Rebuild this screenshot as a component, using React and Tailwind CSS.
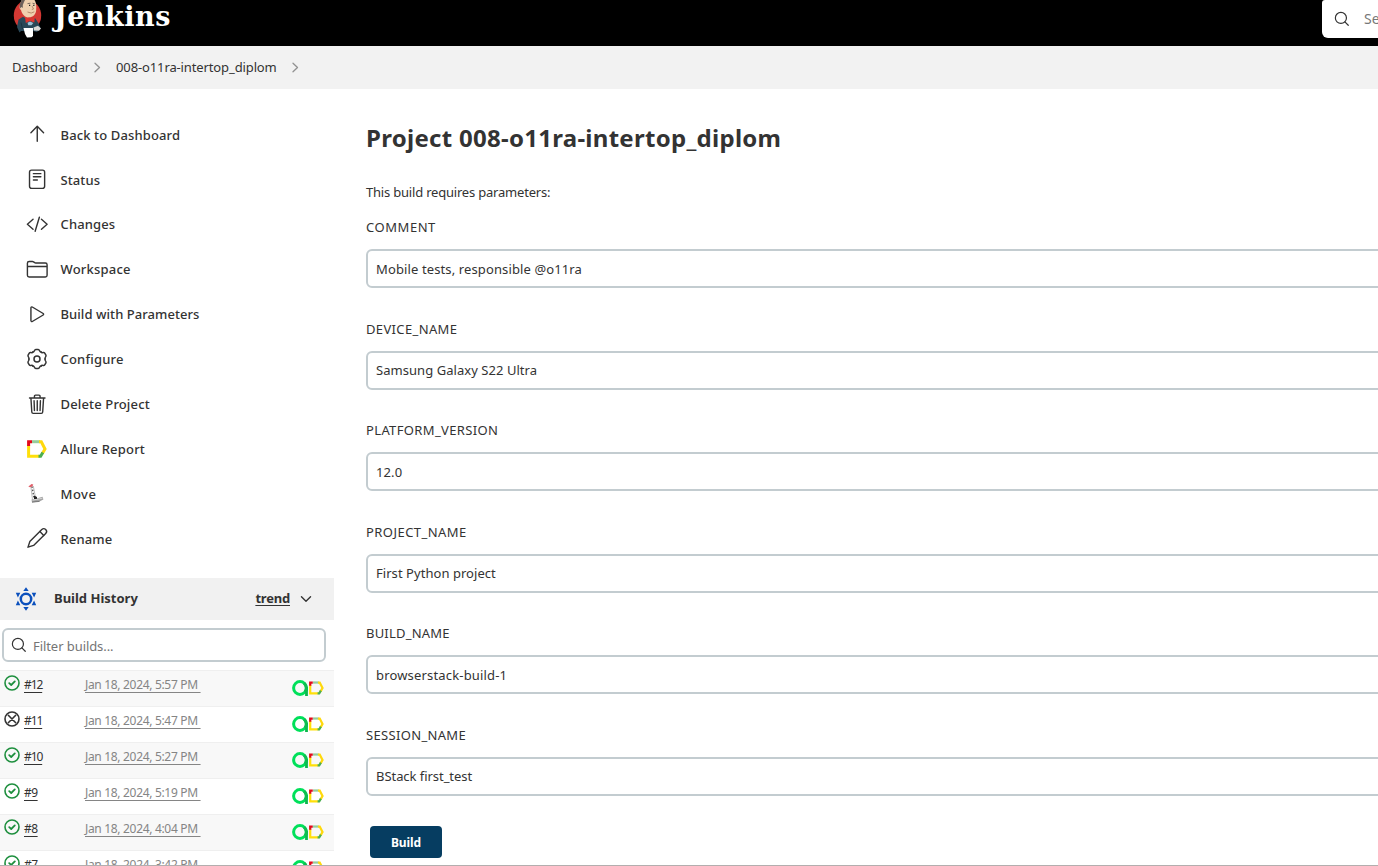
import React from "react";

const line = {
  fill: "none",
  stroke: "currentColor",
  strokeLinecap: "round",
  strokeLinejoin: "round",
  strokeWidth: 32,
};

function Icon({ children, className = "size-[22.5px]" }) {
  return (
    <svg viewBox="0 0 512 512" className={className + " shrink-0"} {...line}>
      {children}
    </svg>
  );
}

function Search({ className }) {
  return (
    <Icon className={className}>
      <g strokeWidth="38">
        <path d="M221 44a177 177 0 10177 177A177 177 0 00221 44z" />
        <path d="M348 348L456 456" />
      </g>
    </Icon>
  );
}

function Chevron({ className }) {
  return (
    <svg viewBox="0 0 12 12" className={className} fill="none" stroke="#929292" strokeWidth="1.3" strokeLinecap="round" strokeLinejoin="round">
      <path d="M4 1.2L8.5 5.5L4 9.8" />
    </svg>
  );
}

function Gear() {
  return (
    <svg viewBox="0 0 24 24" className="size-6 shrink-0" fill="none" stroke="currentColor" strokeWidth="1.5" strokeLinecap="round" strokeLinejoin="round">
      <circle cx="12" cy="12" r="3" />
      {[0, 60, 120, 180, 240, 300].map((a) => (
        <path key={a} transform={`rotate(${a} 12 12)`} d="M7.9 4.9C9.8 5.2 9 2.4 10.8 2.4H13.2C15 2.4 14.2 5.2 16.1 4.9" />
      ))}
    </svg>
  );
}

function Pencil() {
  return (
    <svg viewBox="0 0 24 24" className="size-6 shrink-0" fill="none" stroke="currentColor" strokeWidth="1.4" strokeLinecap="round" strokeLinejoin="round">
      <path d="M3 21.2L4.8 15.6L16.8 3.6A2.7 2.7 0 0120.7 7.5L8.6 19.4L3 21.2Z" />
      <path d="M14.9 5.6L18.7 9.4" />
    </svg>
  );
}

function AllureMark({ className }) {
  return (
    <svg viewBox="0 0 20 18" className={className} fill="none" strokeWidth="3">
      <path d="M5 1.7H13" stroke="#97cc9b" />
      <path d="M12 1.7H14.3L18 9L15.4 13.5" stroke="#ffd90c" />
      <path d="M1.6 5V16.3H12.5" stroke="#ffdf0a" />
      <path d="M15.8 12.5L13.6 16.3H11.5" stroke="#4caf50" />
      <path d="M1.6 6V1.7H5" stroke="#e3091b" />
    </svg>
  );
}

function Crane() {
  return (
    <svg viewBox="0 0 24 24" className="size-6" fill="none">
      <path d="M5.8 4L7.6 18.5M8.3 4L10.8 17" stroke="#b5b5b5" strokeWidth="0.9" />
      <path d="M7 4.5L9.2 17" stroke="#555" strokeWidth="1.4" strokeDasharray="1.5 1.7" />
      <path d="M3.3 4.6L5 3.3L6.5 2L8.3 2.4L7.4 4.6L5 5.2Z" fill="#e0606a" />
      <path d="M6.5 17.5L11.5 16.5L17.6 14.8L18.4 17.5L14.5 19.4L7 20.4Z" fill="#a3a3a3" />
      <path d="M9 13.6L12 15V17H9Z" fill="#222" />
      <path d="M7.5 18.2L17.5 16.2" stroke="#dadada" strokeWidth="0.9" />
      <path d="M7 20.1L14.5 19.4" stroke="#666" strokeWidth="0.8" />
    </svg>
  );
}

function Butler() {
  return (
    <svg viewBox="0 0 30 38" className="h-[38px] w-[30px]">
      <ellipse cx="14.5" cy="15.5" rx="13.7" ry="15.3" fill="#d33833" />
      <path d="M7.5 4C8 -2 13 -4 17 -3C22 -2 23.7 3 23.2 9C23.4 14 20 17.3 16 17.3C12 18 9 14 8 10C6.3 9 6 6 7.5 4Z" fill="#efd0ae" />
      <path d="M7 8.5C6 4 8 -1 13 -2L11 2L9.8 5L9.8 8L8.4 7Z" fill="#6b5f59" />
      <path d="M14.5 3.6L17.4 3.2M19.5 3.2L21.8 3.8" stroke="#5d504a" strokeWidth="0.8" />
      <path d="M16 5.4H17.2M20.2 5.4H21.4" stroke="#222" strokeWidth="1.1" />
      <path d="M19 6L20.5 9L18.8 9.6M14.5 12Q18.5 14.2 21.3 11.8" stroke="#a87a5c" strokeWidth="0.8" fill="none" />
      <path d="M5.5 19.5L10 16.8L16 20L22 18L26 24L27.5 28L24 32L20 31H8L6.5 32.5L4 27Z" fill="#294757" />
      <path d="M12 17L16.7 19.4L21.8 17.2L21.3 22.6L17 21L12.8 23Z" fill="#e0352f" />
      <path d="M14.5 22.8L17 21.6L20.3 23L18.5 25.2H15.3Z" fill="#9dc0d6" />
      <path d="M10.5 28H20V36L18.5 37.3L14 37.5L12 34Z" fill="#fff" />
      <path d="M20.5 27.5L25 25.8L28 28.5L26 30.8L21 30.5Z" fill="#d9d8d6" />
      <path d="M8 22.5L9.5 29" stroke="#1d3442" strokeWidth="1" />
    </svg>
  );
}

const nav = [
  { label: "Back to Dashboard", track: "tracking-[0.13px]", icon: <Icon><path d="M112 220l144-144 144 144M256 84v330" /></Icon> },
  {
    label: "Status",
    track: "tracking-[0.1px]",
    icon: <Icon><rect x="80" y="48" width="344" height="416" rx="48" /><path d="M168 128h170M168 200h170M168 272h90" /></Icon>,
  },
  { label: "Changes", track: "tracking-[0.13px]", icon: <Icon><path d="M160 368L32 256l128-112M352 368l128-112-128-112M304 96l-96 320" /></Icon> },
  {
    label: "Workspace",
    track: "tracking-[0.2px]",
    icon: (
      <Icon>
        <path d="M440 432H72a40 40 0 01-40-40V120a40 40 0 0140-40h75.89a40 40 0 0122.19 6.72l27.84 18.56a40 40 0 0022.19 6.72H440a40 40 0 0140 40v240a40 40 0 01-40 40zM32 192h448" />
      </Icon>
    ),
  },
  {
    label: "Build with Parameters",
    track: "tracking-[0.06px]",
    icon: <Icon><path d="M112 111v290c0 17.44 17 28.52 31 20.16l247.9-148.37c12.12-7.25 12.12-26.33 0-33.58L143 90.84c-14-8.36-31 2.72-31 20.16z" /></Icon>,
  },
  { label: "Configure", track: "tracking-[0.2px]", icon: <Gear /> },
  {
    label: "Delete Project",
    track: "tracking-[0.15px]",
    icon: (
      <Icon>
        <path d="M112 112l20 320c.95 18.49 14.4 32 32 32h184c17.67 0 30.87-13.51 32-32l20-320M80 112h352M192 112V72a23.93 23.93 0 0124-24h80a23.93 23.93 0 0124 24v40M256 176v224M184 176l8 224M328 176l-8 224" />
      </Icon>
    ),
  },
  { label: "Allure Report", track: "tracking-[0.2px]", icon: <AllureMark className="mt-[1px] mr-[1px] h-[18px] w-5" /> },
  { label: "Move", track: "tracking-[0.5px]", icon: <Crane /> },
  { label: "Rename", track: "tracking-[0.15px]", icon: <Pencil /> },
];

const builds = [
  { id: "#12", time: "Jan 18, 2024, 5:57 PM", ok: true },
  { id: "#11", time: "Jan 18, 2024, 5:47 PM", ok: false },
  { id: "#10", time: "Jan 18, 2024, 5:27 PM", ok: true },
  { id: "#9", time: "Jan 18, 2024, 5:19 PM", ok: true },
  { id: "#8", time: "Jan 18, 2024, 4:04 PM", ok: true },
  { id: "#7", time: "Jan 18, 2024, 3:42 PM", ok: true },
];

const fields = [
  { label: "COMMENT", value: "Mobile tests, responsible @o11ra", labelTrack: "tracking-[0.55px]", track: "tracking-[0.12px]" },
  { label: "DEVICE_NAME", value: "Samsung Galaxy S22 Ultra", labelTrack: "tracking-[0.36px]", track: "tracking-[0.05px]" },
  { label: "PLATFORM_VERSION", value: "12.0", labelTrack: "tracking-[0.35px]", track: "tracking-[0.1px]" },
  { label: "PROJECT_NAME", value: "First Python project", labelTrack: "tracking-[0.45px]", track: "tracking-[0.05px]" },
  { label: "BUILD_NAME", value: "browserstack-build-1", labelTrack: "tracking-[0.2px]", track: "tracking-[0.17px]" },
  { label: "SESSION_NAME", value: "BStack first_test", labelTrack: "tracking-[0.33px]", track: "tracking-[-0.05px]" },
];

function BuildStatus({ ok }) {
  return (
    <svg viewBox="0 0 16 16" className={ok ? "size-4 text-[#1e8f3e]" : "size-4 text-[#333]"} fill="none" stroke="currentColor" strokeWidth="1.6" strokeLinecap="round" strokeLinejoin="round">
      <circle cx="8" cy="8" r="7" />
      {ok ? <path d="M5.2 8.2L7.2 10L10.8 6.4" strokeWidth="1.8" /> : <path d="M4.3 4.3L11.7 11.7M11.7 4.3L4.3 11.7" />}
    </svg>
  );
}

function AllureLinks() {
  return (
    <div className="flex items-center">
      <svg viewBox="0 0 16 16" className="size-4" fill="none" strokeWidth="3">
        <circle cx="8" cy="8" r="6.4" stroke="#00e05a" />
        <path d="M14.5 7V16" stroke="#0bb64d" strokeWidth="2.8" />
        <path d="M12 3.2A6.4 6.4 0 0113 12" stroke="#0dbd4f" />
      </svg>
      <AllureMark className="ml-[1px] h-[14px] w-[15px]" />
    </div>
  );
}

function BuildRow({ build, shaded }) {
  return (
    <div className={"flex h-9 shrink-0 items-start border-t border-[#efefef] pl-1 pr-[10px] " + (shaded ? "bg-[#f8f8f8]" : "bg-white")}>
      <div className="pt-1"><BuildStatus ok={build.ok} /></div>
      <a className={"ml-1 mt-[5px] w-[61px] text-[12px] leading-[18px] text-[#333] underline underline-offset-[3px] " + (build.id.length > 2 ? "tracking-[-1.1px]" : "tracking-[-0.5px]")}>
        <span>{build.id}</span>
      </a>
      <a className="mt-[5px] flex-1 whitespace-pre text-[12px] leading-[18px] tracking-[-0.32px] text-[#858585] underline underline-offset-[3px]">{build.time + " "}</a>
      <div className="pt-[9px]"><AllureLinks /></div>
    </div>
  );
}

export default function App() {
  return (
    <div className="flex h-[866px] w-[1378px] flex-col overflow-hidden border-b border-[#b3aeae] bg-white font-['Noto_Sans','Open_Sans',sans-serif] text-[#333]">
      <header className="flex h-[46px] shrink-0 items-start justify-between bg-black">
        <div className="flex items-start pl-[13px]">
          <Butler />
          <span className="ml-[11px] mt-[1px] font-['DejaVu_Serif',serif] text-[27px] font-bold leading-8 tracking-[0.5px] text-white">Jenkins</span>
        </div>
        <div className="flex h-[38px] w-14 items-center overflow-hidden rounded-bl-[6px] rounded-tl-[3px] bg-white pl-3 text-[#333]">
          <Search className="size-4" />
          <span className="ml-[14px] text-[14px] leading-5 text-[#777]">Search</span>
        </div>
      </header>
      <nav className="flex h-[43px] shrink-0 items-center bg-[#f2f2f2] pl-3 pt-px text-[13px]">
        <span className="w-[66px] whitespace-nowrap tracking-[-0.2px]">Dashboard</span>
        <Chevron className="ml-[13px] mr-[13px] size-3" />
        <span className="w-[161px] whitespace-nowrap tracking-[-0.12px]">008-o11ra-intertop_diplom</span>
        <Chevron className="ml-3 size-3" />
      </nav>
      <div className="flex min-h-0 flex-1">
        <aside className="flex w-[334px] shrink-0 flex-col overflow-hidden">
          <div className="flex flex-col pb-[17px] pt-[23px]">
            {nav.map((item) => (
              <a key={item.label} className="flex h-[44.9px] items-center pl-[25px]">
                <div className="flex w-6 justify-center">{item.icon}</div>
                <span className={"ml-[11.5px] whitespace-nowrap pt-[2px] text-[13px] font-medium " + item.track}>{item.label}</span>
              </a>
            ))}
          </div>
          <div className="flex h-[42px] shrink-0 items-center bg-[#f1f1f1] pl-[13px] pr-[21px]">
            <svg viewBox="0 0 26 26" className="size-[26px]" fill="#0b50bd">
              <circle cx="13" cy="13" r="5.2" fill="none" stroke="#0b50bd" strokeWidth="2.5" />
              <path d="M10.3 5L13 1.2L15.7 5ZM10.3 21L13 24.8L15.7 21ZM2.8 6.8L7.3 6.8L4.9 11.4ZM23.2 6.8L18.7 6.8L21.1 11.4ZM2.8 19.2L7.3 19.2L4.9 14.6ZM23.2 19.2L18.7 19.2L21.1 14.6Z" />
            </svg>
            <span className="ml-[15px] flex-1 text-[13px] font-bold">Build History</span>
            <span className="text-[13px] font-bold tracking-[-0.2px] underline underline-offset-2">trend</span>
            <Icon className="ml-[9px] size-[14px]"><path d="M90 170l166 166 166-166" strokeWidth="50" /></Icon>
          </div>
          <div className="ml-[2px] mt-2 flex h-[34px] w-[324px] shrink-0 items-center rounded-[6px] border-2 border-[#c3ccd0] pl-[7px]">
            <Search className="size-4" />
            <span className="ml-[6px] pt-[2px] text-[13px] leading-5 tracking-[-0.07px] text-[#757575]">Filter builds...</span>
          </div>
          <div className="mt-2 flex flex-col">
            {builds.map((b, i) => (
              <BuildRow key={b.id} build={b} shaded={i % 2 === 0} />
            ))}
          </div>
        </aside>
        <main className="flex flex-1 flex-col overflow-hidden pl-8">
          <h1 className="mt-[31px] text-[24px] font-bold leading-9 tracking-[0.28px]"><span>Project 008-o11ra-intertop_diplom</span></h1>
          <p className="mt-[26px] text-[13px] leading-5 tracking-[-0.2px]"><span>This build requires parameters:</span></p>
          <form className="mt-[15px] flex w-[1040px] flex-col">
            {fields.map((f) => (
              <div key={f.label} className="flex h-[101.5px] flex-col">
                <label className={"text-[13px] leading-5 " + f.labelTrack}><span>{f.label}</span></label>
                <div className="mt-[12px] flex h-[39px] items-center rounded-[6px] border-2 border-[#c3ccd0] pl-2 pt-[2px] text-[13px]">
                  <span className={f.track}>{f.value}</span>
                </div>
              </div>
            ))}
          </form>
          <button className="ml-1 flex h-8 w-[72px] shrink-0 items-center justify-center rounded-[4px] bg-[#063d61] pt-px text-[12px] font-bold tracking-[-0.1px] text-white">Build</button>
        </main>
      </div>
    </div>
  );
}
